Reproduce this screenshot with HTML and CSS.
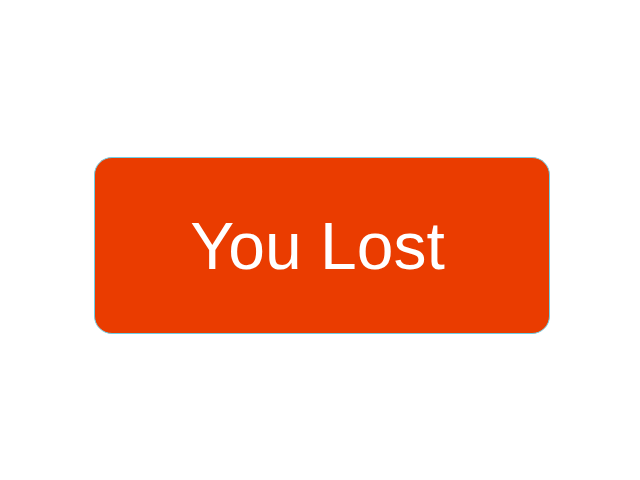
FILE: index.html
```html
<!DOCTYPE html>
<html>
<head>
<meta charset="utf-8">
<link rel="stylesheet" href="styles.css">
</head>
<body>
<div class="page">
  <div class="result">You Lost</div>
</div>
</body>
</html>
```

FILE: styles.css
```css
html, body {
  margin: 0;
  padding: 0;
  background: #ffffff;
}
.page {
  width: 640px;
  height: 480px;
  padding: 157px 0 0 94px;
  box-sizing: border-box;
}
.result {
  width: 456px;
  height: 177px;
  box-sizing: border-box;
  background: #ea3c00;
  border: 1px solid #6fcfe6;
  border-radius: 18px;
  color: #ffffff;
  font-family: "Liberation Sans", Arial, sans-serif;
  font-size: 66px;
  display: flex;
  align-items: center;
  justify-content: center;
  padding-right: 9px;
}
```
